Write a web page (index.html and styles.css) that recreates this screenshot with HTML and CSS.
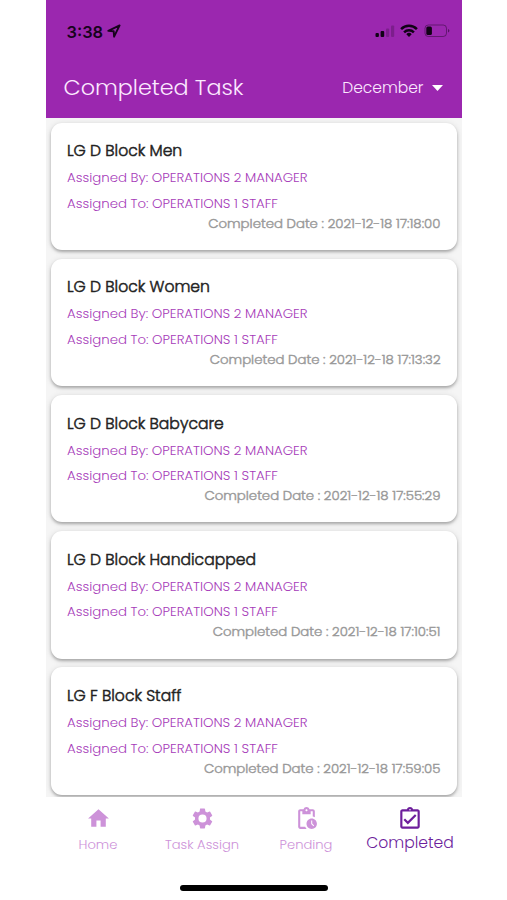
FILE: index.html
```html
<!DOCTYPE html>
<html lang="en">
<head>
<meta charset="utf-8">
<title>Completed Task</title>
<link rel="stylesheet" href="styles.css">
</head>
<body>
<div class="phone">
  <header class="header">
    <div class="status">
      <div class="clock"><span>3:38</span>
        <svg width="14" height="14" viewBox="0 0 14 14"><path d="M1.3 6.9 12.6 1.4 7.1 12.7 6.7 7.3Z" fill="none" stroke="currentColor" stroke-width="1.9" stroke-linejoin="round"/></svg>
      </div>
      <div class="signals">
        <svg width="20" height="14" viewBox="0 0 20 14"><rect x="0.5" y="9" width="3.4" height="4" rx="1"/><rect x="5.6" y="7" width="3.6" height="6" rx="1"/><g opacity=".22"><rect x="11" y="4.5" width="3.2" height="8.5" rx="1"/><rect x="16" y="1.5" width="3.2" height="11.5" rx="1"/></g></svg>
        <svg class="wifi" width="18" height="14" viewBox="0 0 18 14"><g fill="none" stroke="currentColor" stroke-width="2.5"><path d="M1.1 5.1a11.2 11.2 0 0 1 15.8 0"/><path d="M4.1 8.3a7 7 0 0 1 9.8 0"/></g><path d="m9 13-2.7-2.8a3.8 3.8 0 0 1 5.4 0Z"/></svg>
        <svg class="battery" width="26" height="14" viewBox="0 0 26 14"><rect x="1" y="1" width="21.5" height="11.5" rx="3.3" fill="none" stroke="currentColor" opacity=".4"/><path d="M24 5v3.6q1.4-.5 1.4-1.8T24 5Z" opacity=".5"/><rect x="2.3" y="2.6" width="5.6" height="8.5" rx="1.5"/></svg>
      </div>
    </div>
    <div class="toolbar">
      <h1>Completed Task</h1>
      <div class="month"><span>December</span><svg width="11" height="6" viewBox="0 0 11 6"><path d="M0 0h11L5.5 6Z"/></svg></div>
    </div>
  </header>

  <main class="list">
    <article class="card">
      <h2>LG D Block Men</h2>
      <p class="by">Assigned By: OPERATIONS 2 MANAGER</p>
      <p class="to">Assigned To: OPERATIONS 1 STAFF</p>
      <p class="date">Completed Date : 2021-12-18 17:18:00</p>
    </article>
    <article class="card">
      <h2>LG D Block Women</h2>
      <p class="by">Assigned By: OPERATIONS 2 MANAGER</p>
      <p class="to">Assigned To: OPERATIONS 1 STAFF</p>
      <p class="date">Completed Date : 2021-12-18 17:13:32</p>
    </article>
    <article class="card">
      <h2>LG D Block Babycare</h2>
      <p class="by">Assigned By: OPERATIONS 2 MANAGER</p>
      <p class="to">Assigned To: OPERATIONS 1 STAFF</p>
      <p class="date">Completed Date : 2021-12-18 17:55:29</p>
    </article>
    <article class="card">
      <h2>LG D Block Handicapped</h2>
      <p class="by">Assigned By: OPERATIONS 2 MANAGER</p>
      <p class="to">Assigned To: OPERATIONS 1 STAFF</p>
      <p class="date">Completed Date : 2021-12-18 17:10:51</p>
    </article>
    <article class="card">
      <h2>LG F Block Staff</h2>
      <p class="by">Assigned By: OPERATIONS 2 MANAGER</p>
      <p class="to">Assigned To: OPERATIONS 1 STAFF</p>
      <p class="date">Completed Date : 2021-12-18 17:59:05</p>
    </article>
  </main>

  <nav class="nav">
    <a class="tab"><svg width="25" height="25" viewBox="0 0 24 24"><path d="M10 20v-6h4v6h5v-8h3L12 3 2 12h3v8z"/></svg><span>Home</span></a>
    <a class="tab"><svg width="25" height="25" viewBox="0 0 24 24"><path d="M19.14 12.94c.04-.3.06-.61.06-.94 0-.32-.02-.64-.07-.94l2.03-1.58a.49.49 0 0 0 .12-.61l-1.92-3.32a.488.488 0 0 0-.59-.22l-2.39.96c-.5-.38-1.03-.7-1.62-.94l-.36-2.54a.484.484 0 0 0-.48-.41h-3.84c-.24 0-.43.17-.47.41l-.36 2.54c-.59.24-1.13.57-1.62.94l-2.39-.96c-.22-.08-.47 0-.59.22L2.74 8.87c-.12.21-.08.47.12.61l2.03 1.58c-.05.3-.09.63-.09.94s.02.64.07.94l-2.03 1.58a.49.49 0 0 0-.12.61l1.92 3.32c.12.22.37.29.59.22l2.39-.96c.5.38 1.03.7 1.62.94l.36 2.54c.05.24.24.41.48.41h3.84c.24 0 .44-.17.47-.41l.36-2.54c.59-.24 1.13-.56 1.62-.94l2.39.96c.22.08.47 0 .59-.22l1.92-3.32c.12-.22.07-.47-.12-.61l-2.01-1.58zM12 15.9a3.9 3.9 0 1 1 0-7.8 3.9 3.9 0 0 1 0 7.8z"/></svg><span>Task Assign</span></a>
    <a class="tab"><svg width="25" height="25" viewBox="0 0 24 24"><path d="M17 12c-2.76 0-5 2.24-5 5s2.24 5 5 5 5-2.24 5-5-2.24-5-5-5zm1.65 7.35L16.5 17.2V14h1v2.79l1.85 1.85-.7.71zM18 3h-3.18C14.4 1.84 13.3 1 12 1s-2.4.84-2.82 2H6c-1.1 0-2 .9-2 2v15c0 1.1.9 2 2 2h6.11a6.743 6.743 0 0 1-1.42-2H6V5h2v3h8V5h2v5.08c.71.1 1.38.31 2 .6V5c0-1.1-.9-2-2-2zm-6 2c-.55 0-1-.45-1-1s.45-1 1-1 1 .45 1 1-.45 1-1 1z"/></svg><span>Pending</span></a>
    <a class="tab active"><svg width="26" height="26" viewBox="0 0 24 24"><path d="M18 9l-1.41-1.42L10 14.17l-2.59-2.58L6 13l4 4zm1-6h-4.18C14.4 1.84 13.3 1 12 1s-2.4.84-2.82 2H5c-1.1 0-2 .9-2 2v14c0 1.1.9 2 2 2h14c1.1 0 2-.9 2-2V5c0-1.1-.9-2-2-2zm-7-.25c.41 0 .75.34.75.75s-.34.75-.75.75-.75-.34-.75-.75.34-.75.75-.75zM19 19H5V5h14v14z"/></svg><span>Completed</span></a>
  </nav>
  <div class="indicator"></div>
</div>
</body>
</html>
```
FILE: styles.css
```css
* { box-sizing: border-box; }
body { margin: 0; background: #fff; font-family: Poppins, Inter, sans-serif; }
h1, h2, p { margin: 0; white-space: nowrap; }
svg { display: block; fill: currentColor; flex: none; }

.phone { width: 416px; height: 900px; margin-left: 46px; display: flex; flex-direction: column; overflow: hidden; }

.header { height: 118px; background: #9b27af; flex: none; }
.status { height: 62px; padding: 0 12px 0 20.5px; display: flex; justify-content: space-between; align-items: center; color: #17031d; }
.clock { display: flex; align-items: center; gap: 4px; font: 600 16.4px Inter, sans-serif; }
.clock span { position: relative; top: 1px; }
.signals { display: flex; align-items: center; color: #100215; }
.wifi { margin-left: 5px; }
.battery { margin-left: 6px; }
.toolbar { height: 50px; padding: 0 19px 0 17.5px; display: flex; justify-content: space-between; align-items: center; color: #fbe9ff; }
h1 { font-size: 22.3px; font-weight: 300; }
.month { display: flex; align-items: center; gap: 8.5px; font-size: 15.5px; font-weight: 300; }
.month svg { margin-top: 2px; color: #fff; }

.list { height: 679px; flex: none; padding: 4.5px 5px 0; display: flex; flex-direction: column; gap: 8.95px; overflow: hidden; background: #f5f5f5; }
.card { height: 127.3px; flex: none; padding: 16.6px 16.5px 0 16px; border-radius: 11px; background: #fff; box-shadow: 0 2px 3px rgba(0, 0, 0, .26), 0 1px 6px rgba(0, 0, 0, .12); }
h2 { font-size: 15.6px; line-height: 24px; font-weight: 300; color: #222; -webkit-text-stroke: .5px #222; }
.by, .to, .date { line-height: 20px; font-size: 13.3px; font-weight: 300; }
.by, .to { color: #a63bb9; }
.by { margin-top: 5px; }
.to { margin-top: 5.5px; }
.date { text-align: right; color: #999; -webkit-text-stroke: .45px #999; }

.nav { height: 88px; flex: none; display: grid; grid-template-columns: repeat(4, 1fr); padding-top: 8.5px; }
.tab { display: flex; flex-direction: column; align-items: center; color: #cd92d9; font-size: 13.1px; line-height: 20px; font-weight: 300; white-space: nowrap; }
.tab span { margin-top: 4.5px; }
.active { color: #6d1e9c; font-size: 15.6px; }
.active span { margin-top: 1.5px; }

.indicator { width: 148px; height: 6px; margin: 0 auto; border-radius: 3px; background: #000; flex: none; }
```
